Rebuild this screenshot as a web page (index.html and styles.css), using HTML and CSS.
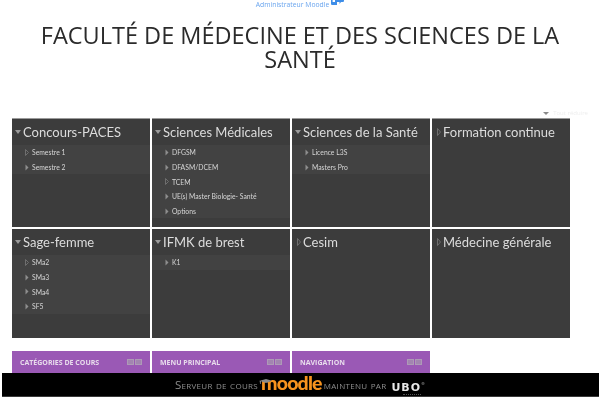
FILE: index.html
```html
<!DOCTYPE html>
<html lang="fr">
<head>
<meta charset="utf-8">
<title>Faculté de Médecine</title>
<link rel="stylesheet" href="styles.css">
</head>
<body>
<div class="page">
  <div class="user"><span>Administrateur Moodle</span><svg class="chat" width="14" height="9" viewBox="0 0 14 9"><path d="M1 0h1.600v5H7v3H2.500C1.500 8 1 7.500 1 6.500z" fill="#3f8ee8"/><path d="M5 0h9v3.500c0 1-.5 1.500-1.500 1.500H11l-1.500 2V5H5z" fill="#3f8ee8"/></svg></div>
  <h1 class="title">FACULTÉ DE MÉDECINE ET DES SCIENCES DE LA SANTÉ</h1>
  <div class="collapse"><svg width="6" height="3" viewBox="0 0 6 3"><path d="M0 0h6L3 3z" fill="#8a8a8a"/></svg><span>Tout réduire</span></div>
  <div class="grid">
    <section class="cell">
      <h2 class="cat"><svg class="down" width="6" height="4" viewBox="0 0 6 4"><path d="M0 0h6L3 4z"/></svg>Concours-PACES</h2>
      <ul class="subs">
        <li><svg class="tri hollow" width="4" height="7" viewBox="0 0 4 7"><path d="M.5.500l3 3-3 3z"/></svg>Semestre 1</li>
        <li><svg class="tri" width="4" height="7" viewBox="0 0 4 7"><path d="M.5.500l3 3-3 3z"/></svg>Semestre 2</li>
      </ul>
    </section>
    <section class="cell">
      <h2 class="cat"><svg class="down" width="6" height="4" viewBox="0 0 6 4"><path d="M0 0h6L3 4z"/></svg>Sciences Médicales</h2>
      <ul class="subs">
        <li><svg class="tri" width="4" height="7" viewBox="0 0 4 7"><path d="M.5.500l3 3-3 3z"/></svg>DFGSM</li>
        <li><svg class="tri" width="4" height="7" viewBox="0 0 4 7"><path d="M.5.500l3 3-3 3z"/></svg>DFASM/DCEM</li>
        <li><svg class="tri hollow" width="4" height="7" viewBox="0 0 4 7"><path d="M.5.500l3 3-3 3z"/></svg>TCEM</li>
        <li><svg class="tri" width="4" height="7" viewBox="0 0 4 7"><path d="M.5.500l3 3-3 3z"/></svg>UE(s) Master Biologie- Santé</li>
        <li><svg class="tri" width="4" height="7" viewBox="0 0 4 7"><path d="M.5.500l3 3-3 3z"/></svg>Options</li>
      </ul>
    </section>
    <section class="cell">
      <h2 class="cat"><svg class="down" width="6" height="4" viewBox="0 0 6 4"><path d="M0 0h6L3 4z"/></svg>Sciences de la Santé</h2>
      <ul class="subs">
        <li><svg class="tri" width="4" height="7" viewBox="0 0 4 7"><path d="M.5.500l3 3-3 3z"/></svg>Licence L3S</li>
        <li><svg class="tri" width="4" height="7" viewBox="0 0 4 7"><path d="M.5.500l3 3-3 3z"/></svg>Masters Pro</li>
      </ul>
    </section>
    <section class="cell">
      <h2 class="cat"><svg class="right" width="4" height="8" viewBox="0 0 4 8"><path d="M.5.500l3 3.500-3 3.500z"/></svg>Formation continue</h2>
    </section>
    <section class="cell">
      <h2 class="cat"><svg class="down" width="6" height="4" viewBox="0 0 6 4"><path d="M0 0h6L3 4z"/></svg>Sage-femme</h2>
      <ul class="subs">
        <li><svg class="tri hollow" width="4" height="7" viewBox="0 0 4 7"><path d="M.5.500l3 3-3 3z"/></svg>SMa2</li>
        <li><svg class="tri" width="4" height="7" viewBox="0 0 4 7"><path d="M.5.500l3 3-3 3z"/></svg>SMa3</li>
        <li><svg class="tri" width="4" height="7" viewBox="0 0 4 7"><path d="M.5.500l3 3-3 3z"/></svg>SMa4</li>
        <li><svg class="tri" width="4" height="7" viewBox="0 0 4 7"><path d="M.5.500l3 3-3 3z"/></svg>SF5</li>
      </ul>
    </section>
    <section class="cell">
      <h2 class="cat"><svg class="down" width="6" height="4" viewBox="0 0 6 4"><path d="M0 0h6L3 4z"/></svg>IFMK de brest</h2>
      <ul class="subs">
        <li><svg class="tri" width="4" height="7" viewBox="0 0 4 7"><path d="M.5.500l3 3-3 3z"/></svg>K1</li>
      </ul>
    </section>
    <section class="cell">
      <h2 class="cat"><svg class="right" width="4" height="8" viewBox="0 0 4 8"><path d="M.5.500l3 3.500-3 3.500z"/></svg>Cesim</h2>
    </section>
    <section class="cell">
      <h2 class="cat"><svg class="right" width="4" height="8" viewBox="0 0 4 8"><path d="M.5.500l3 3.500-3 3.500z"/></svg>Médecine générale</h2>
    </section>
  </div>
  <div class="blocks">
    <div class="block"><span>CATÉGORIES DE COURS</span><span class="ctrl"><i></i><i></i></span></div>
    <div class="block"><span>MENU PRINCIPAL</span><span class="ctrl"><i></i><i></i></span></div>
    <div class="block"><span>NAVIGATION</span><span class="ctrl"><i></i><i></i></span></div>
  </div>
</div>
<footer class="footer">
  <span class="smallcaps">Serveur de cours</span>
  <span class="moodle"><svg class="cap" width="13" height="6" viewBox="0 0 13 6"><path d="M0 2L7 0l6 1.800L7 4 2 2.300 1.700 5H1L.8 2.200z" fill="#8a8a8a"/></svg>moodle</span>
  <span class="smallcaps">maintenu par</span>
  <span class="ubo"><span class="ubo-mark">UBO<sup class="reg">®</sup></span><i class="ubo-line"></i></span>
</footer>
</body>
</html>
```
FILE: styles.css
```css
* { box-sizing: border-box; }
html, body { margin: 0; height: 100%; overflow: hidden; background: #fff; }
body { position: relative; font-family: "Open Sans", sans-serif; }
.page { height: 400px; padding: 0 10px 0 12px; filter: blur(0.35px); }
.user { display: flex; justify-content: center; align-items: flex-start; gap: 1px; height: 20px; margin: 0 -10px 0 -12px; font-size: 6.800px; line-height: 9px; color: #6aa5ee; }
.chat { margin-top: -3px; }
.title { margin: 3px -10px 0 -12px; padding: 0 30px; font-weight: 400; font-size: 23.500px; line-height: 24px; text-align: center; color: #2b2b2b; }
.collapse { display: flex; justify-content: flex-end; align-items: center; gap: 4px; height: 10px; margin: 37px 2px 0 0; font-size: 6px; color: #eeeeee; }
.grid { display: grid; grid-template-columns: repeat(4, 138px); grid-template-rows: 109px 109px; gap: 2px; background: #fff; }
.cell { background: #3c3c3c; border-top: 1px solid #9a9a9a; }
.cell:nth-child(n+5) { border-top: 0; }
.cat { display: flex; align-items: center; height: 26px; margin: 0; padding: 0 0 1px 3px; font-family: "Lato", sans-serif; font-weight: 400; font-size: 13px; color: #dcdcdc; white-space: nowrap; }
.down { margin-right: 2px; fill: #9a9a9a; }
.right { margin: 0 2px 0 2px; fill: none; stroke: #6e6e6e; }
.subs { list-style: none; margin: 0; padding: 0; background: #424242; font-family: "Lato", sans-serif; font-size: 6.800px; color: #d6d6d6; }
.subs li { display: flex; align-items: center; gap: 3px; height: 14.700px; padding-left: 13px; }
.tri { fill: #8e8e8e; }
.tri.hollow { fill: none; stroke: #6e6e6e; }
.blocks { display: grid; grid-template-columns: repeat(3, 138px); gap: 2px; margin-top: 13px; }
.block { display: flex; justify-content: space-between; align-items: center; height: 22px; padding: 0 8px; background: #9a59b5; font-size: 7px; font-weight: 700; color: #e8dcec; }
.ctrl { display: flex; gap: 1px; }
.ctrl i { width: 7px; height: 6px; background: #a285b0; border: 1px solid #ad9ab6; }
.footer { position: absolute; left: 2px; right: 1px; top: 373px; height: 24px; display: flex; justify-content: center; align-items: center; gap: 2px; background: #000; border-bottom: 1px solid #3a3a3a; color: #9a9a9a; filter: blur(0.3px); }
.smallcaps { font-variant: small-caps; font-size: 11.500px; letter-spacing: .3px; color: #8f8f8f; }
.moodle { display: flex; align-items: flex-start; margin: -3px 0 0 1px; font-family: "Lato", sans-serif; font-weight: 900; font-size: 19.500px; line-height: 20px; color: #f7931e; letter-spacing: -.8px; }
.cap { margin: 6px -11px 0 -2px; position: relative; }
.ubo { display: flex; flex-direction: column; align-items: flex-end; margin-left: 3px; padding-top: 3px; }
.ubo-mark { font-family: "DejaVu Sans", sans-serif; font-weight: 700; font-size: 11px; line-height: 11px; letter-spacing: 1px; color: #e8e8e8; }
.ubo-line { width: 18px; margin: 1px 5px 0 0; border-top: 1px dotted #555; }
.reg { font-size: 4px; vertical-align: 6px; color: #888; }
```
